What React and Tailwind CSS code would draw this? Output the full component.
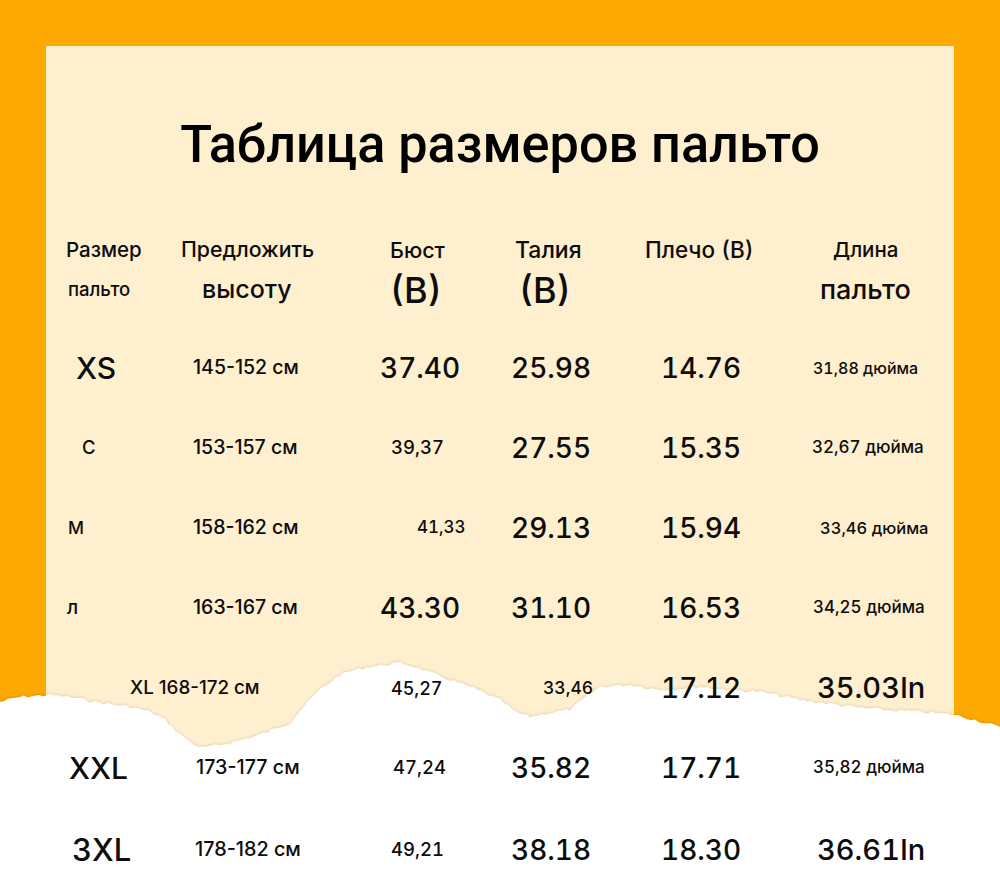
import React from 'react'

const cols = ['w-[124px]', 'w-[200px]', 'w-[130px]', 'w-[140px]', 'w-[160px]', 'w-[154px]']

const head1 = [
  ['Размер', 'pl-[20px] text-[20.5px]'],
  ['Предложить', 'pl-[11px] text-[21.3px]'],
  ['Бюст', 'pl-[20px] text-[21.5px]'],
  ['Талия', 'pl-[15px] text-[23px]'],
  ['Плечо (В)', 'pl-[5px] text-[22.5px]'],
  ['Длина', 'pl-[33px] text-[20.5px]'],
]

const head2 = [
  ['пальто', 'pl-[22px] text-[18.5px]'],
  ['высоту', 'pl-[32px] text-[25px]'],
  ['(В)', 'pl-[20px] text-[36px]'],
  ['(В)', 'pl-[19px] text-[36px]'],
  ['', ''],
  ['пальто', 'pl-[20px] text-[27px]'],
]

const BIG = 'text-[28px]'

const rows = [
  [
    ['XS', 'pl-[30px] text-[30px]'],
    ['145-152 см', 'pl-[23px] text-[19.5px]'],
    ['37.40', 'pl-[10px] ' + BIG],
    ['25.98', 'pl-[11px] ' + BIG],
    ['14.76', 'pl-[21px] ' + BIG],
    ['31,88 дюйма', 'pl-[13px] text-[16px]'],
  ],
  [
    ['С', 'pl-[36px] text-[18.5px]'],
    ['153-157 см', 'pl-[23px] text-[19.5px]'],
    ['39,37', 'pl-[21px] text-[18.5px]'],
    ['27.55', 'pl-[11px] ' + BIG],
    ['15.35', 'pl-[21px] ' + BIG],
    ['32,67 дюйма', 'pl-[12px] text-[17px]'],
  ],
  [
    ['М', 'pl-[22px] text-[17.5px]'],
    ['158-162 см', 'pl-[23px] text-[19.5px]'],
    ['41,33', 'pl-[47px] text-[17px]'],
    ['29.13', 'pl-[11px] ' + BIG],
    ['15.94', 'pl-[21px] ' + BIG],
    ['33,46 дюйма', 'pl-[20px] text-[16.5px]'],
  ],
  [
    ['л', 'pl-[21px] text-[19px]'],
    ['163-167 см', 'pl-[23px] text-[19.5px]'],
    ['43.30', 'pl-[10px] ' + BIG],
    ['31.10', 'pl-[11px] ' + BIG],
    ['16.53', 'pl-[21px] ' + BIG],
    ['34,25 дюйма', 'pl-[13px] text-[17px]'],
  ],
  [
    ['XL 168-172 см', 'pl-[84px] text-[18.8px]', 2],
    ['45,27', 'pl-[21px] text-[18px]'],
    ['33,46', 'pl-[43px] text-[17.5px]'],
    ['17.12', 'pl-[21px] ' + BIG],
    ['35.03In', 'pl-[17px] text-[29px]'],
  ],
  [
    ['XXL', 'pl-[23px] text-[30px]'],
    ['173-177 см', 'pl-[26px] text-[19.7px]'],
    ['47,24', 'pl-[23px] text-[18.5px]'],
    ['35.82', 'pl-[11px] ' + BIG],
    ['17.71', 'pl-[21px] ' + BIG],
    ['35,82 дюйма', 'pl-[13px] text-[17px]'],
  ],
  [
    ['3XL', 'pl-[26px] text-[31px]'],
    ['178-182 см', 'pl-[25px] text-[19.8px]'],
    ['49,21', 'pl-[21px] text-[18.5px]'],
    ['38.18', 'pl-[11px] ' + BIG],
    ['18.30', 'pl-[21px] ' + BIG],
    ['36.61In', 'pl-[17px] text-[29px]'],
  ],
]

// top edge of the torn paper, page coords
const edge = [
  [0, 702], [20, 697], [50, 695], [75, 698], [100, 703], [130, 707], [150, 712], [165, 720],
  [175, 730], [190, 742], [200, 748], [215, 746], [230, 743], [260, 735], [290, 723], [305, 705],
  [320, 690], [340, 675], [355, 670], [370, 667], [400, 663], [415, 667], [430, 673], [450, 680],
  [470, 687], [500, 700], [515, 712], [530, 717], [550, 713], [570, 710], [585, 698], [600, 687],
  [630, 685], [660, 690], [700, 687], [730, 690], [760, 692], [800, 700], [830, 704], [860, 708],
  [900, 711], [920, 712], [955, 715], [975, 720], [1000, 727],
]

function tornPath() {
  let seed = 7
  const rnd = () => {
    seed = (seed * 9301 + 49297) % 233280
    return seed / 233280
  }
  const pts = []
  for (let i = 0; i < edge.length - 1; i++) {
    const [x1, y1] = edge[i]
    const [x2, y2] = edge[i + 1]
    const steps = Math.max(2, Math.round((x2 - x1) / 4))
    for (let s = 0; s < steps; s++) {
      const t = s / steps
      pts.push([x1 + (x2 - x1) * t, y1 + (y2 - y1) * t + (rnd() - 0.5) * 3])
    }
  }
  pts.push(edge[edge.length - 1])
  const top = 640
  return 'M0,243 ' + pts.map(([x, y]) => `L${x.toFixed(1)},${(y - top).toFixed(1)}`).join(' ') + ' L1000,243 Z'
}

function Cell({ text, cls, w }) {
  // digit columns use tabular figures, height ranges keep proportional ones
  const nums = text.includes('-') ? '' : 'tabular-nums'
  return (
    <div className={`${w} shrink-0 whitespace-nowrap ${nums} ${cls}`}>{text}</div>
  )
}

export default function App() {
  return (
    <div className="relative w-[1000px] h-[883px] overflow-hidden bg-[#FEA902] text-[#0d0d0d] font-medium font-['Inter','Roboto',sans-serif]">
      <div className="ml-[46px] mt-[46px] w-[908px] h-[837px] bg-[#FEEFCF]">
        <h1 className="pt-[54px] h-[144px] leading-[90px] text-center text-[52.2px] font-medium text-black font-['Roboto',sans-serif]">
          Таблица размеров пальто
        </h1>

        <div className="relative z-10 mt-[40px]">
          <div className="flex h-[40px] items-center">
            {head1.map(([t, c], i) => <Cell key={i} text={t} cls={c} w={cols[i]} />)}
          </div>
          <div className="flex h-[40px] items-center">
            {head2.map(([t, c], i) => <Cell key={i} text={t} cls={c} w={cols[i]} />)}
          </div>

          <div className="mt-[18px]">
            {rows.map((row, r) => {
              let ci = 0
              return (
                <div key={r} className={`flex h-[80px] items-center ${r === 6 ? 'mt-[2px]' : ''}`}>
                  {row.map(([t, c, span], i) => {
                    const w = span === 2 ? 'w-[324px]' : cols[ci]
                    ci += span || 1
                    return <Cell key={i} text={t} cls={c} w={w} />
                  })}
                </div>
              )
            })}
          </div>
        </div>
      </div>

      <svg className="absolute left-0 top-[640px] z-0" width="1000" height="243" viewBox="0 0 1000 243">
        <defs>
          <filter id="sh" x="-5%" y="-20%" width="110%" height="140%">
            <feGaussianBlur in="SourceAlpha" stdDeviation="1.5" />
            <feOffset dy="-1" />
            <feComponentTransfer>
              <feFuncA type="linear" slope="0.12" />
            </feComponentTransfer>
            <feMerge>
              <feMergeNode />
              <feMergeNode in="SourceGraphic" />
            </feMerge>
          </filter>
        </defs>
        <path d={tornPath()} fill="#ffffff" filter="url(#sh)" />
      </svg>
    </div>
  )
}
